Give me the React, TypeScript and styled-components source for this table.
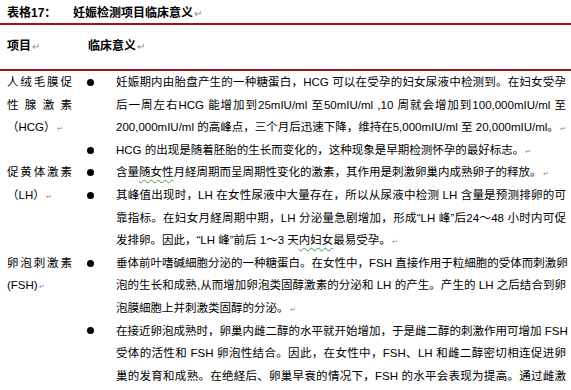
import React from 'react';
import styled, { createGlobalStyle } from 'styled-components';

const GlobalStyle = createGlobalStyle`
  html, body {
    margin: 0;
    padding: 0;
    background: #fff;
  }
  body {
    overflow: hidden;
    font-family: "Liberation Sans", "Noto Sans CJK SC", sans-serif;
    color: #000;
  }
`;

const RULE = '#a31515';
const LINE = 22.6;

const Page = styled.div`
  width: 571px;
  height: 390px;
  overflow: hidden;
`;

const Caption = styled.div`
  display: flex;
  height: 19px;
  padding: 4px 7px 0;
  line-height: 19px;
  font-size: 12px;
  font-weight: bold;
  border-bottom: 2px solid ${RULE};
`;

const CaptionLabel = styled.span`
  width: 66px;
  flex: none;
`;

const Table = styled.div`
  display: grid;
  grid-template-columns: 80px 1fr;
  align-items: start;
`;

const HeadCell = styled.div<{ $indent: number }>`
  height: 18px;
  padding: 12px 0 14px ${p => p.$indent}px;
  line-height: 18px;
  font-size: 12px;
  font-weight: bold;
  border-bottom: 2px solid ${RULE};
`;

const NameCell = styled.div`
  padding: 0 8px 0 7px;
  font-size: 11.5px;
  line-height: ${LINE}px;
`;

const DescCell = styled.div`
  display: flex;
  flex-direction: column;
`;

const Item = styled.div`
  display: flex;
  align-items: flex-start;
`;

const BulletBox = styled.div`
  flex: none;
  width: 36px;
  height: ${LINE}px;
  padding-left: 7px;
  box-sizing: border-box;
  display: flex;
  align-items: center;
`;

const Dot = styled.span`
  width: 7px;
  height: 7px;
  border-radius: 50%;
  background: #000;
`;

const Text = styled.div`
  width: 450px;
  font-size: 11.5px;
  line-height: ${LINE}px;
`;

const Line = styled.div<{ $fill?: boolean }>`
  height: ${LINE}px;
  white-space: nowrap;
  text-align: ${p => (p.$fill ? 'justify' : 'left')};
  text-align-last: ${p => (p.$fill ? 'justify' : 'left')};
`;

const Mark = styled.span<{ $big?: boolean }>`
  margin-left: 1px;
  font-size: ${p => (p.$big ? '10px' : '7px')};
  font-weight: normal;
  color: #8a8a8a;
`;

const Wavy = styled.span`
  text-decoration: underline wavy #3c9a3c;
  text-decoration-thickness: 1px;
  text-underline-offset: 3px;
`;

type Para = { lines: React.ReactNode[]; cont?: boolean };
type Row = { name: React.ReactNode[]; items: Para[] };

const rows: Row[] = [
  {
    name: ['人绒毛膜促', '性 腺 激 素', '（HCG）'],
    items: [
      {
        lines: [
          '妊娠期内由胎盘产生的一种糖蛋白，HCG 可以在受孕的妇女尿液中检测到。在妇女受孕',
          '后一周左右HCG 能增加到25mIU/ml 至50mIU/ml ,10 周就会增加到100,000mIU/ml 至',
          '200,000mIU/ml 的高峰点，三个月后迅速下降，维持在5,000mIU/ml 至 20,000mIU/ml。',
        ],
      },
      { lines: ['HCG 的出现是随着胚胎的生长而变化的，这种现象是早期检测怀孕的最好标志。'] },
    ],
  },
  {
    name: ['促黄体激素', '（LH）'],
    items: [
      { lines: [<>含量<Wavy>随女性</Wavy>月経周期而呈周期性变化的激素，其作用是刺激卵巢内成熟卵子的释放。</>] },
      {
        lines: [
          '其峰值出现时，LH 在女性尿液中大量存在，所以从尿液中检测 LH 含量是预测排卵的可',
          '靠指标。在妇女月経周期中期，LH 分泌量急剧增加，形成“LH 峰”后24～48 小时内可促',
          <>发排卵。因此，“LH 峰”前后 1～3 天<Wavy>内妇女</Wavy>最易受孕。</>,
        ],
      },
    ],
  },
  {
    name: ['卵泡刺激素', '(FSH)'],
    items: [
      {
        lines: [
          '垂体前叶嗜碱細胞分泌的一种糖蛋白。在女性中，FSH 直接作用于粒細胞的受体而刺激卵',
          '泡的生长和成熟,从而增加卵泡类固醇激素的分泌和 LH 的产生。产生的 LH 之后结合到卵',
          '泡膜細胞上并刺激类固醇的分泌。',
        ],
      },
      {
        cont: true,
        lines: [
          '在接近卵泡成熟时，卵巢内雌二醇的水平就开始增加，于是雌二醇的刺激作用可增加 FSH',
          '受体的活性和 FSH 卵泡性结合。因此，在女性中，FSH、LH 和雌二醇密切相连促进卵',
          '巢的发育和成熟。在绝経后、卵巢早衰的情况下，FSH 的水平会表现为提高。通过雌激',
        ],
      },
    ],
  },
];

const App: React.FC = () => {
  return <Page>
    <GlobalStyle />
    <Caption>
      <CaptionLabel>表格17：</CaptionLabel>
      <span>妊娠检测项目临床意义<Mark $big>↵</Mark></span>
    </Caption>
    <Table>
      <HeadCell $indent={7}>项目<Mark $big>↵</Mark></HeadCell>
      <HeadCell $indent={8}>临床意义<Mark $big>↵</Mark></HeadCell>
      {rows.map((row, r) => (
        <React.Fragment key={r}>
          <NameCell>
            {row.name.map((n, i) => (
              <Line key={i} $fill={i < row.name.length - 1}>
                {n}{i === row.name.length - 1 && <Mark>↵</Mark>}
              </Line>
            ))}
          </NameCell>
          <DescCell>
            {row.items.map((para, p) => (
              <Item key={p}>
                <BulletBox><Dot /></BulletBox>
                <Text>
                  {para.lines.map((l, i) => {
                    const last = i === para.lines.length - 1 && !para.cont;
                    return <Line key={i} $fill={!last}>
                      {l}{last && <Mark>↵</Mark>}
                    </Line>;
                  })}
                </Text>
              </Item>
            ))}
          </DescCell>
        </React.Fragment>
      ))}
    </Table>
  </Page>;
};

export default App;
